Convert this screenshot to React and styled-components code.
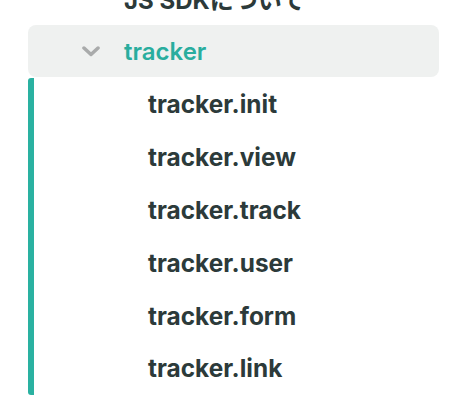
import React from 'react';
import styled, {createGlobalStyle} from 'styled-components';

const GlobalStyle = createGlobalStyle`
  body {
    margin: 0;
    background: #ffffff;
    font-family: Inter, "Noto Sans CJK JP", sans-serif;
  }
`;

const Nav = styled.nav`
  width: 452px;
  height: 412px;
  overflow: hidden;
  box-sizing: border-box;
  padding: 0 13px 0 28px;
`;

const Scroller = styled.div`
  margin-top: -28px;
`;

const Title = styled.div`
  height: 52px;
  display: flex;
  align-items: center;
  padding-left: 96px;
  font-size: 24px;
  font-weight: 700;
  color: #2c3a3a;
`;

const GroupHeader = styled.div`
  height: 52px;
  display: flex;
  align-items: center;
  background: #eff1f0;
  border-radius: 8px;
  padding-left: 54px;
  margin-top: 1px;
`;

const Chevron = styled.svg`
  width: 18px;
  height: 11px;
  margin-right: 24px;
  flex-shrink: 0;
`;

const GroupLabel = styled.span`
  font-size: 24px;
  font-weight: 600;
  color: #29ad9e;
`;

const Children = styled.ul`
  list-style: none;
  margin: 1px 0 0;
  padding: 0;
  border-left: 6px solid #2ab1a1;
  border-radius: 3px;
`;

const Item = styled.li`
  height: 52.8px;
  display: flex;
  align-items: center;
  padding-left: 114px;
  font-size: 24.4px;
  font-weight: 700;
  color: #2c3a3a;
`;

const items = [
  'tracker.init',
  'tracker.view',
  'tracker.track',
  'tracker.user',
  'tracker.form',
  'tracker.link',
];

const App = () => (
  <Nav>
    <GlobalStyle />
    <Scroller>
      <Title>JS SDKについて</Title>
      <GroupHeader>
        <Chevron viewBox="0 0 18 11">
          <path
            d="M2 2 L9 8.5 L16 2"
            fill="none"
            stroke="#a9abab"
            strokeWidth="3.5"
            strokeLinecap="round"
            strokeLinejoin="round"
          />
        </Chevron>
        <GroupLabel>tracker</GroupLabel>
      </GroupHeader>
      <Children>
        {items.map(item => (
          <Item key={item}>{item}</Item>
        ))}
      </Children>
    </Scroller>
  </Nav>
);

export default App;
